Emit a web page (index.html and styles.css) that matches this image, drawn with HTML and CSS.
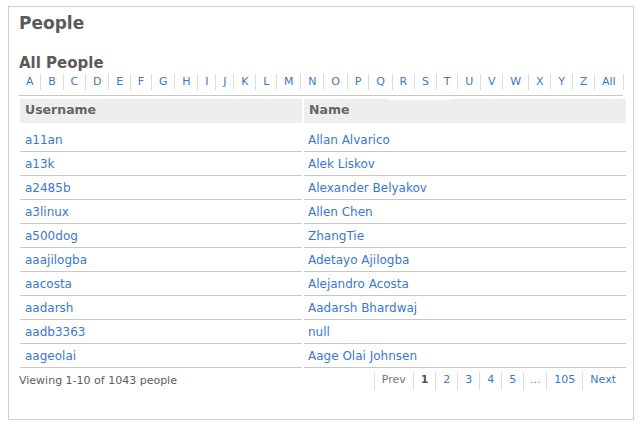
FILE: index.html
```html
<!DOCTYPE html>
<html lang="en">
<head>
<meta charset="utf-8">
<title>People</title>
<link rel="stylesheet" href="styles.css">
</head>
<body>
<div class="panel">
  <h1 class="title">People</h1>
  <h2 class="subtitle">All People</h2>
  <ul class="letters">
    <li><a href="#">A</a></li><li><a href="#">B</a></li><li><a href="#">C</a></li><li><a href="#">D</a></li><li><a href="#">E</a></li><li><a href="#">F</a></li><li><a href="#">G</a></li><li><a href="#">H</a></li><li><a href="#">I</a></li><li><a href="#">J</a></li><li><a href="#">K</a></li><li><a href="#">L</a></li><li><a href="#">M</a></li><li><a href="#">N</a></li><li><a href="#">O</a></li><li><a href="#">P</a></li><li><a href="#">Q</a></li><li><a href="#">R</a></li><li><a href="#">S</a></li><li><a href="#">T</a></li><li><a href="#">U</a></li><li><a href="#">V</a></li><li><a href="#">W</a></li><li><a href="#">X</a></li><li><a href="#">Y</a></li><li><a href="#">Z</a></li><li><a href="#">All</a></li>
  </ul>
  <div class="rule"></div>
  <div class="table">
    <div class="th">Username</div><div class="th">Name</div>
    <div class="td first"><a href="#">a11an</a></div><div class="td first"><a href="#">Allan Alvarico</a></div>
    <div class="td"><a href="#">a13k</a></div><div class="td"><a href="#">Alek Liskov</a></div>
    <div class="td"><a href="#">a2485b</a></div><div class="td"><a href="#">Alexander Belyakov</a></div>
    <div class="td"><a href="#">a3linux</a></div><div class="td"><a href="#">Allen Chen</a></div>
    <div class="td"><a href="#">a500dog</a></div><div class="td"><a href="#">ZhangTie</a></div>
    <div class="td"><a href="#">aaajilogba</a></div><div class="td"><a href="#">Adetayo Ajilogba</a></div>
    <div class="td"><a href="#">aacosta</a></div><div class="td"><a href="#">Alejandro Acosta</a></div>
    <div class="td"><a href="#">aadarsh</a></div><div class="td"><a href="#">Aadarsh Bhardwaj</a></div>
    <div class="td"><a href="#">aadb3363</a></div><div class="td"><a href="#">null</a></div>
    <div class="td"><a href="#">aageolai</a></div><div class="td"><a href="#">Aage Olai Johnsen</a></div>
    <span class="tab-mark"></span>
  </div>
  <div class="footer">
    <span class="count">Viewing 1-10 of 1043 people</span>
    <ul class="pager">
      <li class="muted">Prev</li>
      <li class="current">1</li>
      <li><a href="#">2</a></li>
      <li><a href="#">3</a></li>
      <li><a href="#">4</a></li>
      <li><a href="#">5</a></li>
      <li class="muted dots">…</li>
      <li><a href="#">105</a></li>
      <li><a href="#">Next</a></li>
    </ul>
  </div>
</div>
</body>
</html>
```

FILE: styles.css
```css
html, body {
  background: #fff;
}
body {
  margin: 6px 7px 8px 8px;
  font-family: "DejaVu Sans", "Liberation Sans", sans-serif;
  color: #555;
}
a {
  color: #3a78c9;
  text-decoration: none;
}
.panel {
  box-sizing: border-box;
  width: 626px;
  height: 414px;
  border: 1px solid #cfcfcf;
  box-shadow: 0 0 6px rgba(0, 0, 0, 0.12);
  padding: 6px 10px 0 10px;
  background: #fff;
}
.title {
  margin: 0;
  font-size: 17px;
  font-weight: bold;
  line-height: 21px;
  color: #5a5a5a;
}
.subtitle {
  margin: 20px 0 0 0;
  font-size: 15px;
  font-weight: bold;
  line-height: 18px;
  color: #5a5a5a;
}
.letters {
  list-style: none;
  margin: 2px 0 0 0;
  padding: 0;
  display: flex;
  font-size: 11px;
  line-height: 16px;
}
.letters li {
  padding: 0 6.88px;
  border-right: 1px solid #ddd;
}
.rule {
  margin-top: 5px;
  height: 1px;
  background: #c8c8c8;
}
.table {
  position: relative;
  margin: 3px 0 0 1px;
  display: grid;
  grid-template-columns: 282px 322px;
  column-gap: 2px;
  font-size: 12px;
}
.th {
  background: #eeeeee;
  color: #666;
  font-size: 12.5px;
  font-weight: bold;
  line-height: 14px;
  padding: 4px 5px 6px 5px;
}
.td {
  line-height: 14px;
  padding: 5px 5px 4px 5px;
  border-bottom: 1px solid #c8c8c8;
}
.td.first {
  margin-top: 5px;
}
.td:nth-child(even) {
  padding-left: 4px;
}
.tab-mark {
  position: absolute;
  left: 369px;
  top: -1px;
  width: 61px;
  height: 2px;
  background: #fff;
}
.footer {
  display: flex;
  justify-content: space-between;
  align-items: flex-start;
  font-size: 11px;
  margin-top: 4px;
}
.count {
  line-height: 16px;
  padding-top: 1px;
  color: #5c5c5c;
}
.pager {
  list-style: none;
  margin: 0;
  padding: 0;
  display: flex;
}
.pager li {
  line-height: 16px;
  padding: 0 7px 2px 7px;
  border-left: 1px solid #ddd;
}
.pager .dots {
  padding: 0 5.5px 2px 5.5px;
}
.pager .muted {
  color: #777;
}
.pager .current {
  font-weight: bold;
  color: #555;
}
```
